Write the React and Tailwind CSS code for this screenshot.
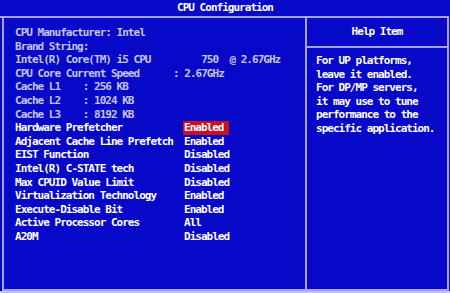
const info = [
  "CPU Manufacturer: Intel",
  "Brand String:",
  "Intel(R) Core(TM) i5 CPU         750  @ 2.67GHz",
  "CPU Core Current Speed      : 2.67GHz",
  "Cache L1    : 256 KB",
  "Cache L2    : 1024 KB",
  "Cache L3    : 8192 KB"
];

const settings = [
  { label: "Hardware Prefetcher", value: "Enabled", active: true },
  { label: "Adjacent Cache Line Prefetch", value: "Enabled" },
  { label: "EIST Function", value: "Disabled" },
  { label: "Intel(R) C-STATE tech", value: "Disabled" },
  { label: "Max CPUID Value Limit", value: "Disabled" },
  { label: "Virtualization Technology", value: "Enabled" },
  { label: "Execute-Disable Bit", value: "Enabled" },
  { label: "Active Processor Cores", value: "All" },
  { label: "A20M", value: "Disabled" }
];

const help = [
  "For UP platforms,",
  "leave it enabled.",
  "For DP/MP servers,",
  "it may use to tune",
  "performance to the",
  "specific application."
];

export default function App() {
  return (
    <div className="flex h-[293px] w-[450px] flex-col overflow-hidden bg-[#0808c8] font-['DejaVu_Sans_Mono',monospace] text-[11px] font-bold leading-[13.6px] tracking-[-0.98px]">
      <div className="flex h-[16px] items-start justify-center pt-[1px] text-white">CPU Configuration</div>
      <div className="h-[2px] w-[449px] bg-[#a4a4f2]" />
      <div className="ml-[2px] flex h-[273px] w-[447px] border-x-2 border-b-2 border-[#a4a4f2]">
        <div className="w-[301px] pl-[11px] pt-[8px]">
          {info.map((line) => (
            <div key={line} className="whitespace-pre text-[#c4c4e6]">
              {line}
            </div>
          ))}
          {settings.map(({ label, value, active }) => (
            <div key={label} className="flex whitespace-pre text-white">
              <span className="w-[169px]">{label}</span>
              <span className={active ? "-ml-[1px] w-[46px] bg-[#c81020] pl-[1px]" : ""}>{value}</span>
            </div>
          ))}
        </div>
        <div className="w-[2px] bg-[#a4a4f2]" />
        <div className="flex flex-1 flex-col">
          <div className="flex h-[28px] items-center justify-center text-white">Help Item</div>
          <div className="h-[2px] bg-[#a4a4f2]" />
          <div className="pl-[9px] pt-[6px] text-white">
            {help.map((line) => (
              <div key={line} className="whitespace-pre">
                {line}
              </div>
            ))}
          </div>
        </div>
      </div>
      <div className="flex-1 bg-[#c0c0f0]" />
    </div>
  );
}
